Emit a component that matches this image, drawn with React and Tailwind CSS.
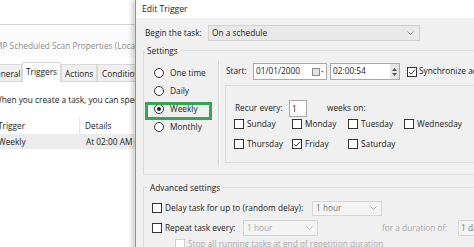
import React from "react";

function Check({ checked, disabled }) {
  return (
    <span
      className={`shrink-0 w-[10px] h-[10px] border bg-white flex items-center justify-center ${
        disabled ? "border-[#cfcfcf]" : "border-[#333333]"
      }`}
    >
      {checked && (
        <svg width="8" height="8" viewBox="0 0 8 8">
          <path d="M1 4.2 L3.1 6.2 L7 1.6" fill="none" stroke="#333" strokeWidth="1" />
        </svg>
      )}
    </span>
  );
}

function Radio({ checked }) {
  return (
    <span className="shrink-0 w-[10px] h-[10px] rounded-full border border-[#333333] bg-white flex items-center justify-center">
      {checked && <span className="w-[4px] h-[4px] rounded-full bg-[#1e1e1e]" />}
    </span>
  );
}

function Chevron({ color = "#8a8a8a" }) {
  return (
    <svg width="7" height="4" viewBox="0 0 7 4" className="shrink-0">
      <path d="M0.5 0.5 L3.5 3.5 L6.5 0.5" fill="none" stroke={color} strokeWidth="0.9" />
    </svg>
  );
}

function Tab({ children, selected, className }) {
  return (
    <div
      className={`shrink-0 border-t border-l border-r border-[#d9d9d9] leading-[17px] whitespace-nowrap overflow-hidden ${
        selected ? "h-[20px] bg-white relative z-10 -mb-px" : "h-[17px] bg-[#f0f0f0]"
      } ${className}`}
    >
      {children}
    </div>
  );
}

export default function App() {
  return (
    <div className="relative w-[474px] h-[247px] overflow-hidden bg-white text-[8.3px] text-[#1b1b1b] font-['Open_Sans',sans-serif]">
      {/* Background: task properties window */}
      <div className="absolute left-[-60px] top-[24px] w-[200px] h-[240px] bg-white border-t border-[#d4d4d4] flex flex-col">
        <div className="h-[32px] shrink-0 pl-[55px] pt-[14px] leading-[14px] text-[#8e8e8e] bg-[#fbfbfb] whitespace-nowrap text-[8.3px]">
          MP Scheduled Scan Properties (Local Computer)
        </div>
        <div className="h-[25px] shrink-0 flex items-end pl-[47px] border-b border-[#d9d9d9] bg-white">
          <Tab className="w-[35px] pl-[2px]">General</Tab>
          <Tab selected className="w-[39px] pl-[3px]">Triggers</Tab>
          <Tab className="w-[36px] pl-[3px]">Actions</Tab>
          <Tab className="w-[50px] pl-[4px]">Conditions</Tab>
        </div>
        <div className="mt-[12px] pl-[54px] leading-[12px] whitespace-nowrap">
          When you create a task, you can specify the conditions that will trigger the task.
        </div>
        <div className="mt-[11px] ml-[52px] h-[17px] shrink-0 flex leading-[17px]">
          <div className="w-[88px] shrink-0 pl-[6px] border-r border-[#e5e5e5]">Trigger</div>
          <div className="pl-[5px] whitespace-nowrap">Details</div>
        </div>
        <div className="ml-[52px] h-[15px] shrink-0 flex leading-[15px] bg-[#ececec]">
          <div className="w-[88px] shrink-0 pl-[6px]">Weekly</div>
          <div className="pl-[6px] whitespace-nowrap">At 02:00 AM every Friday of every week</div>
        </div>
      </div>

      {/* Foreground: Edit Trigger dialog */}
      <div className="absolute left-[135px] top-0 w-[345px] h-[260px] bg-[#f0f0f0] border-l border-[#8b96a5] shadow-[-3px_0_5px_rgba(0,0,0,0.18)] flex flex-col">
        <div className="h-[18px] shrink-0 bg-white pl-[6px] flex items-center text-[8.6px]">Edit Trigger</div>
        <div className="flex-1 pl-[7px] pt-[7px] flex flex-col">
          {/* Begin the task */}
          <div className="h-[16px] shrink-0 flex items-center pl-[2px]">
            <span className="w-[63px] shrink-0 whitespace-nowrap">Begin the task:</span>
            <div className="w-[212px] shrink-0 h-[16px] bg-[#e9e9e9] border border-[#d2d2d2] flex items-center justify-between pl-[3px] pr-[5px]">
              <span>On a schedule</span>
              <Chevron />
            </div>
          </div>

          {/* Settings group */}
          <div className="relative shrink-0 mt-[9px] h-[125px] w-[340px] border border-[#dcdcdc] flex">
            <span className="absolute -top-[7px] left-[1px] px-[2px] bg-[#f0f0f0] leading-[13px]">Settings</span>

            <div className="w-[74px] shrink-0 pt-[13px] pl-[10px] flex flex-col">
              {["One time", "Daily", "Weekly", "Monthly"].map((t) => (
                <div key={t} className="h-[18px] flex items-center gap-[6px] whitespace-nowrap">
                  <Radio checked={t === "Weekly"} />
                  <span>{t}</span>
                </div>
              ))}
            </div>
            <div className="absolute left-[1px] top-[51px] w-[67px] h-[18px] border-[3px] border-[#33a853]" />

            <div className="shrink-0 mt-[9px] mb-[7px] w-[2px] border-l border-[#d0d0d0] border-r border-r-white" />

            <div className="w-[262px] shrink-0 pl-[6px] pt-[12px] flex flex-col">
              <div className="h-[17px] shrink-0 flex items-center">
                <span className="w-[27px] shrink-0">Start:</span>
                <div className="w-[74px] shrink-0 h-[17px] bg-white border border-[#a8a8a8] flex items-center justify-between pl-[2px] pr-[2px]">
                  <span>01/01/2000</span>
                  <svg width="12" height="8" viewBox="0 0 12 8">
                    <rect x="0.5" y="0.5" width="7" height="7" fill="#e4e4e4" stroke="#8a8a8a" />
                    <path d="M9 3 L11.5 3 L10.25 4.6 Z" fill="#555" />
                  </svg>
                </div>
                <div className="ml-[3px] shrink-0 w-[70px] h-[17px] bg-white border border-[#a8a8a8] flex items-center justify-between pl-[2px]">
                  <span>02:00:54</span>
                  <div className="w-[9px] h-[15px] bg-[#e6e6e6] flex flex-col items-center justify-center gap-[2px]">
                    <svg width="5" height="3" viewBox="0 0 5 3"><path d="M0 3 L2.5 0 L5 3 Z" fill="#555" /></svg>
                    <svg width="5" height="3" viewBox="0 0 5 3"><path d="M0 0 L2.5 3 L5 0 Z" fill="#555" /></svg>
                  </div>
                </div>
                <div className="ml-[7px] shrink-0">
                  <Check checked />
                </div>
                <span className="ml-[2px] shrink-0 whitespace-nowrap">Synchronize across time zones</span>
              </div>

              {/* Recurrence inner group */}
              <div className="mt-[5px] -ml-[1px] shrink-0 h-[78px] w-[260px] border border-[#dcdcdc] flex flex-col pl-[8px] pt-[14px]">
                <div className="h-[17px] shrink-0 flex items-center">
                  <span className="pl-[1px] w-[55px] shrink-0 whitespace-nowrap">Recur every:</span>
                  <div className="w-[18px] shrink-0 h-[17px] bg-white border border-[#a8a8a8] pl-[2px] leading-[15px]">1</div>
                  <span className="ml-[20px] shrink-0 whitespace-nowrap">weeks on:</span>
                </div>
                {[
                  [["Sunday", false], ["Monday", false], ["Tuesday", false], ["Wednesday", false]],
                  [["Thursday", false], ["Friday", true], ["Saturday", false]],
                ].map((row, i) => (
                  <div key={i} className={`h-[14px] shrink-0 grid grid-cols-[58px_56px_56px_80px] ${i === 1 ? "mt-[6px]" : ""}`}>
                    {row.map(([d, c]) => (
                      <div key={d} className="flex items-center gap-[3px] whitespace-nowrap">
                        <Check checked={c} />
                        <span>{d}</span>
                      </div>
                    ))}
                  </div>
                ))}
              </div>
            </div>
          </div>

          {/* Advanced settings */}
          <div className="relative shrink-0 mt-[12px] h-[80px] w-[340px] border border-[#dcdcdc] flex flex-col pl-[8px] pt-[12px]">
            <span className="absolute -top-[7px] left-[4px] px-[2px] bg-[#f0f0f0] leading-[13px] whitespace-nowrap">Advanced settings</span>
            <div className="h-[16px] shrink-0 flex items-center">
              <Check />
              <span className="ml-[3px] shrink-0 w-[147px] whitespace-nowrap">Delay task for up to (random delay):</span>
              <div className="w-[70px] shrink-0 h-[15px] bg-[#f4f4f4] border border-[#d6d6d6] flex items-center justify-between pl-[3px] pr-[4px] text-[#7a7a7a]">
                <span>1 hour</span>
                <Chevron color="#a0a0a0" />
              </div>
            </div>
            <div className="mt-[4px] h-[16px] shrink-0 flex items-center">
              <Check />
              <span className="ml-[3px] shrink-0 w-[78px] whitespace-nowrap">Repeat task every:</span>
              <div className="w-[75px] shrink-0 h-[16px] bg-[#f4f4f4] border border-[#d6d6d6] flex items-center justify-between pl-[3px] pr-[4px] text-[#a8a8a8]">
                <span>1 hour</span>
                <Chevron color="#b0b0b0" />
              </div>
              <span className="ml-[64px] shrink-0 w-[76px] whitespace-nowrap text-[#a8a8a8]">for a duration of:</span>
              <div className="w-[60px] shrink-0 h-[16px] bg-[#f4f4f4] border border-[#d6d6d6] flex items-center pl-[2px] text-[#7a7a7a]">
                <span>1 day</span>
              </div>
            </div>
            <div className="mt-[1px] h-[14px] shrink-0 flex items-center pl-[23px]">
              <Check disabled />
              <span className="ml-[3px] whitespace-nowrap text-[#a8a8a8]">Stop all running tasks at end of repetition duration</span>
            </div>
          </div>
        </div>
      </div>
    </div>
  );
}
